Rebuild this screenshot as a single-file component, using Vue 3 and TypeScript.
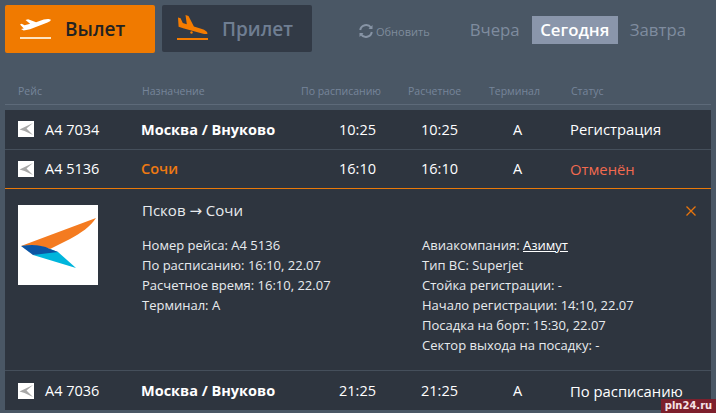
<template>
  <div class="board">
    <div class="top">
      <div class="tab tab-active">
        <svg class="tab-icon" width="31" height="22" viewBox="0 0 31 22">
          <path d="M0 9.5l1.6-.7 3 1.500 5.500-1.600-4.600-3.600 2.600-.9 8 3 7.600-2.600c2.600-.9 5.800-1 7 0 .4.800-.8 1.800-3.200 2.800L10 14.200l-6.300 1.200L1 14l2.800-.6z" fill="#fff" transform="translate(0 -2)" />
          <rect x="0" y="20" width="31" height="2" fill="#fde3c2" />
        </svg>
        <span>Вылет</span>
      </div>
      <div class="tab tab-other">
        <svg class="tab-icon" width="31" height="25" viewBox="0 0 31 25">
          <path d="M1 2.500l2.600.8 2.200 4.800 4 1.200L8.500 0l3 .9 5.400 10.600 8 2.600c3 1 5.600 2.700 5.600 4.300-.2.800-2 .9-4.400.3L7 13.600 1.600 11.800z" fill="#f57c00" />
          <circle cx="14.500" cy="17.500" r="1.200" fill="#f57c00" />
          <rect x="0" y="23" width="31" height="2" fill="#f57c00" />
        </svg>
        <span>Прилет</span>
      </div>
      <div class="refresh">
        <svg width="16" height="16" viewBox="0 0 16 16" fill="none" stroke="#8794a5" stroke-width="2">
          <path d="M2.200 7A6 6 0 0 1 13 4.600" />
          <path d="M13.800 9A6 6 0 0 1 3 11.400" />
          <path d="M14.500 2v4h-4z" fill="#8794a5" stroke="none" />
          <path d="M1.500 14v-4h4z" fill="#8794a5" stroke="none" />
        </svg>
        <span>Обновить</span>
      </div>
      <div class="days">
        <span
          v-for="d in days"
          :key="d"
          class="day"
          :class="{ 'day-active': d === 'Сегодня' }"
        >{{ d }}</span>
      </div>
    </div>

    <div class="heads">
      <span v-for="h in heads" :key="h">{{ h }}</span>
    </div>

    <div class="table">
      <template v-for="f in flights" :key="f.num">
        <div class="row" :class="{ 'row-open': f.open }">
          <span class="flight">
            <svg class="mini" width="16" height="16" viewBox="0 0 16 16">
              <rect width="16" height="16" fill="#fff" />
              <path d="M15 2L1.500 8.500l5 1.500L15 14 8.500 7.500z" fill="#a8a8a8" />
            </svg>
            {{ f.num }}
          </span>
          <span class="dest">{{ f.dest }}</span>
          <span class="time">{{ f.sched }}</span>
          <span class="time2">{{ f.est }}</span>
          <span class="term">{{ f.term }}</span>
          <span class="status">{{ f.status }}</span>
        </div>
        <div v-if="f.open" class="detail">
          <div class="logo">
            <svg width="80" height="80" viewBox="0 0 80 80">
              <rect width="80" height="80" fill="#fff" />
              <path d="M3 41L78 13c-6 9-15 15-26 21L32 44C22 40 12 40 3 41z" fill="#f47b20" />
              <path d="M32 44l8 3 18 16-43-13z" fill="#00b5dc" />
              <path d="M3 41c10-1.500 20-1.500 29 3l8 3-25 3z" fill="#0b55a4" />
            </svg>
          </div>
          <div class="info">
            <div class="route">Псков <span class="arrow">→</span> Сочи</div>
            <div class="cols">
              <div class="col-left">
                <div v-for="l in leftLines" :key="l">{{ l }}</div>
              </div>
              <div class="col-right">
                <div>Авиакомпания: <a class="airline">Азимут</a></div>
                <div v-for="l in rightLines" :key="l">{{ l }}</div>
              </div>
            </div>
          </div>
          <svg class="close" width="10" height="10" viewBox="0 0 10 10" stroke="#e9750c" stroke-width="1.300">
            <path d="M.5.5l9 9M9.500.5l-9 9" />
          </svg>
        </div>
      </template>
    </div>

    <div class="stamp">pln24.ru</div>
  </div>
</template>

<script setup lang="ts">
interface Flight {
  num: string;
  dest: string;
  sched: string;
  est: string;
  term: string;
  status: string;
  open?: boolean;
}

const days: string[] = ['Вчера', 'Сегодня', 'Завтра'];
const heads: string[] = ['Рейс', 'Назначение', 'По расписанию', 'Расчетное', 'Терминал', 'Статус'];

const flights: Flight[] = [
  { num: 'А4 7034', dest: 'Москва / Внуково', sched: '10:25', est: '10:25', term: 'A', status: 'Регистрация' },
  { num: 'А4 5136', dest: 'Сочи', sched: '16:10', est: '16:10', term: 'A', status: 'Отменён', open: true },
  { num: 'А4 7036', dest: 'Москва / Внуково', sched: '21:25', est: '21:25', term: 'A', status: 'По расписанию' },
];

const leftLines: string[] = [
  'Номер рейса: А4 5136',
  'По расписанию: 16:10, 22.07',
  'Расчетное время: 16:10, 22.07',
  'Терминал: A',
];

const rightLines: string[] = [
  'Тип ВС: Superjet',
  'Стойка регистрации: -',
  'Начало регистрации: 14:10, 22.07',
  'Посадка на борт: 15:30, 22.07',
  'Сектор выхода на посадку: -',
];
</script>

<style scoped>
.board {
  position: relative;
  width: 716px;
  height: 413px;
  overflow: hidden;
  padding: 5px 5px 0;
  box-sizing: border-box;
  background: #4a5765;
  font-family: "Open Sans", sans-serif;
  color: #fff;
}

.top {
  display: flex;
  align-items: flex-start;
  height: 48px;
}

.tab {
  display: flex;
  align-items: center;
  width: 150px;
  height: 48px;
  box-sizing: border-box;
  padding-left: 15px;
  font-size: 19px;
  font-weight: 600;
  border-radius: 2px;
}

.tab span {
  margin-left: 14px;
}

.tab-active {
  background: #f07a00;
  color: #222;
}

.tab-active .tab-icon {
  margin-bottom: 2px;
}

.tab-other {
  height: 47px;
  margin-left: 7px;
  background: #323a46;
  color: #6f7e92;
}

.tab-other .tab-icon {
  margin-bottom: 3px;
}

.tab-icon {
  flex: none;
}

.refresh {
  display: flex;
  align-items: center;
  gap: 2px;
  margin: 18px 0 0 46px;
  font-size: 11px;
  color: #7f8c9c;
}

.days {
  display: flex;
  margin: 11px 0 0 30px;
  font-size: 16.800px;
  color: #7f8c9f;
}

.day {
  height: 28px;
  line-height: 28px;
  padding: 0 10px;
}

.day-active {
  margin: 0 2px;
  padding: 0 8.500px;
  background: #8a96ab;
  color: #fff;
  font-weight: 600;
}

.heads {
  display: grid;
  grid-template-columns: 124px 159px 107px 81px 82px 1fr;
  height: 25px;
  margin-top: 26px;
  padding-left: 13px;
  border-bottom: 1px solid #5d6a79;
  font-size: 10.500px;
  line-height: 25px;
  color: #76859a;
}

.table {
  margin-top: 5px;
  background: #2e353f;
}

.row {
  display: grid;
  grid-template-columns: 123px 198px 82px 92px 57px 1fr;
  align-items: center;
  height: 38px;
  padding: 0 0 1px 13px;
  border-bottom: 1px solid #454f5b;
  font-size: 14.500px;
}

.row:last-child {
  height: 39px;
  padding-bottom: 0;
  border-bottom: none;
}

.row-open {
  height: 37px;
  border-bottom-color: #e9790a;
}

.flight {
  display: flex;
  align-items: center;
  gap: 11px;
}

.mini {
  flex: none;
}

.dest {
  font-weight: 700;
}

.status {
  font-size: 14.800px;
}

.row-open .dest {
  color: #ef7a12;
  font-weight: 600;
}

.row-open .status {
  color: #f26a4f;
}

.detail {
  position: relative;
  display: flex;
  height: 182px;
  box-sizing: border-box;
  padding: 16px 13px 0;
  border-bottom: 1px solid #454f5b;
  font-size: 13px;
  line-height: 20px;
  color: #e8ebee;
}

.logo {
  flex: none;
  width: 80px;
  height: 80px;
}

.info {
  flex: 1;
  margin: -5px 0 0 44px;
}

.route {
  margin-bottom: 14px;
  font-size: 15px;
  line-height: 20px;
}

.arrow {
  font-family: "DejaVu Sans", sans-serif;
}

.cols {
  display: flex;
}

.col-left {
  width: 280px;
}

.airline {
  color: #fff;
  text-decoration: underline;
}

.close {
  position: absolute;
  top: 17px;
  right: 15px;
}

.stamp {
  position: absolute;
  right: 0;
  bottom: 0;
  width: 55px;
  height: 14px;
  background: #7d1f2c;
  color: #f6e3e5;
  font-family: "DejaVu Sans", sans-serif;
  font-size: 10px;
  font-weight: 700;
  line-height: 14px;
  text-align: center;
}
</style>

<style>
html,
body {
  margin: 0;
  background: #4a5765;
}
</style>
